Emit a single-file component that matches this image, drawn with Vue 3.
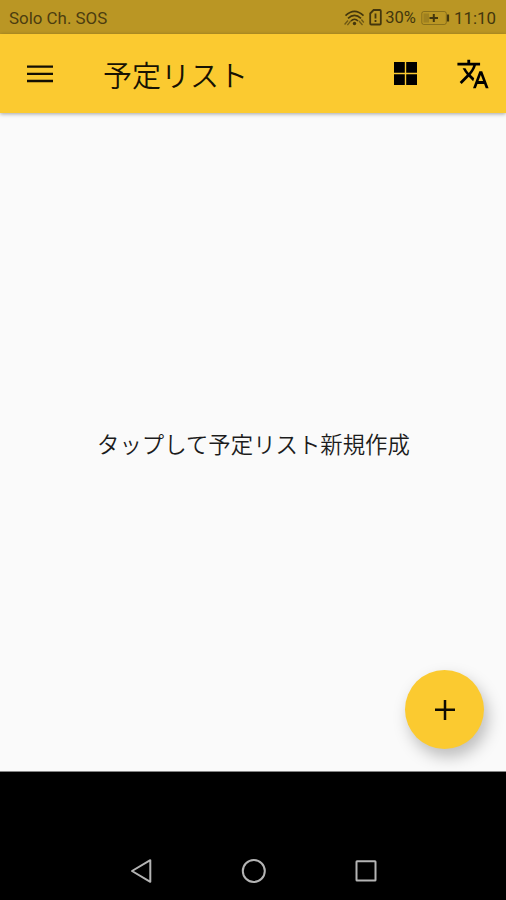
<template>
  <div class="screen">
    <!-- ステータスバー -->
    <div class="status-bar">
      <span class="carrier">Solo Ch. SOS</span>
      <div class="status-icons">
        <svg class="wifi" width="21" height="18" viewBox="0 0 21 18">
          <g fill="none" stroke="currentColor" stroke-width="1.6">
            <path d="M1.5 6.6Q10.5-2 19.5 6.6" />
            <path d="M4 9.4Q10.5 3.2 17 9.4" />
            <path d="M6.9 12Q10.5 8.4 14.1 12" />
            <path d="M.6 15.5l3.4-4M3.4 16.2l3.2-4M15 12l3.5 4M17.4 10.5l2.4 3" stroke-width="1.3" opacity=".65" />
          </g>
          <circle cx="10.5" cy="14.5" r="1.7" fill="currentColor" />
        </svg>
        <svg class="sim" width="13" height="17" viewBox="0 0 13 17">
          <path d="M1.2 4.5L4.6 1h6.2q1 0 1 1v12.5q0 1-1 1H2.2q-1 0-1-1z" fill="none" stroke="currentColor" stroke-width="1.8" />
          <path d="M6.5 4.5v5M6.5 11v2" stroke="currentColor" stroke-width="1.8" />
        </svg>
        <span class="percent">30%</span>
        <svg class="battery" width="29" height="16" viewBox="0 0 29 16">
          <rect x=".8" y="1.5" width="24.5" height="13" rx="2" fill="none" stroke="currentColor" opacity=".4" />
          <rect x="2.5" y="3.5" width="5.5" height="9" fill="currentColor" opacity=".22" />
          <path d="M8.5 8h8.5M12.8 4v8" stroke="currentColor" stroke-width="2" />
          <path d="M27 4.5v7" stroke="currentColor" stroke-width="2.2" />
        </svg>
        <span class="clock">{{ time }}</span>
      </div>
    </div>

    <!-- アプリバー -->
    <header class="app-bar">
      <button class="icon-button menu-button" aria-label="メニュー">
        <svg width="26" height="18" viewBox="0 0 26 18">
          <path d="M0 1.6h26M0 8.8h26M0 16h26" stroke="#130f03" stroke-width="2.3" />
        </svg>
      </button>
      <h1 class="title">予定リスト</h1>
      <button class="icon-button grid-button" aria-label="表示切替">
        <svg width="23" height="23" viewBox="0 0 23 23">
          <path d="M0 0h10.8v10.8H0zM12.2 0H23v10.8H12.2zM0 12.2h10.8V23H0zM12.2 12.2H23V23H12.2z" />
        </svg>
      </button>
      <button class="icon-button" aria-label="言語">
        <svg width="34" height="34" viewBox="0 0 24 24">
          <path d="M12.87 15.07l-2.54-2.51.03-.03c1.74-1.94 2.98-4.17 3.71-6.53H17V4h-7V2H8v2H1v1.99h11.17C11.5 7.92 10.44 9.75 9 11.35 8.07 10.32 7.3 9.19 6.69 8h-2c.73 1.63 1.73 3.17 2.98 4.56l-5.09 5.02L4 19l5-5 3.11 3.11.76-2.04zM18.5 10h-2L12 22h2l1.12-3h4.75L21 22h2l-4.5-12zm-2.62 7l1.62-4.33L19.12 17h-3.24z" />
        </svg>
      </button>
    </header>

    <!-- 空の一覧 -->
    <main class="content">
      <p class="empty-text">タップして予定リスト新規作成</p>
      <button class="fab" aria-label="追加">
        <svg width="20" height="20" viewBox="0 0 20 20">
          <path d="M0 9.8h20M10 0v20" stroke="#100c02" stroke-width="2.5" />
        </svg>
      </button>
    </main>

    <!-- ナビゲーションバー -->
    <nav class="nav-bar">
      <svg width="24" height="28" viewBox="0 0 24 28">
        <path d="M2 14L20.3 3.2v21.6z" />
      </svg>
      <svg width="28" height="28" viewBox="0 0 28 28">
        <circle cx="13.8" cy="14" r="11" />
      </svg>
      <svg width="24" height="28" viewBox="0 0 24 28">
        <rect x="2.5" y="4.2" width="19" height="19.4" rx=".5" />
      </svg>
    </nav>
  </div>
</template>

<script setup>
import { ref } from 'vue'

const time = ref('11:10')
</script>

<style>
body {
  margin: 0;
}
</style>

<style scoped>
.screen {
  display: flex;
  flex-direction: column;
  height: 900px;
  overflow: hidden;
  background-color: #fafafa;
  font-family: Roboto, 'Noto Sans CJK JP', sans-serif;
}

/* ステータスバー */
.status-bar {
  display: flex;
  align-items: center;
  justify-content: space-between;
  flex-shrink: 0;
  height: 34px;
  padding: 1px 10px 0 9px;
  box-sizing: border-box;
  background-color: #ba9624;
  color: #4c3d10;
  font-size: 16.5px;
}

.carrier {
  padding-top: 1px;
  font-size: 16.9px;
}

.status-icons {
  display: flex;
  align-items: center;
  color: #43360d;
}

.sim {
  margin-left: 4px;
}

.percent {
  margin-left: 3px;
}

.battery {
  margin: 0 4px 0 5px;
}

.clock {
  padding-top: 1px;
  font-size: 16.9px;
}

/* アプリバー */
.app-bar {
  display: flex;
  align-items: center;
  flex-shrink: 0;
  height: 79px;
  padding: 0 16px 0 27px;
  box-sizing: border-box;
  background-color: #fbca30;
  box-shadow: 0 1px 4px rgba(0, 0, 0, 0.35);
  z-index: 1;
}

.icon-button {
  display: flex;
  padding: 0;
  border: none;
  background: none;
  cursor: pointer;
}

.title {
  flex: 1;
  margin: 0 0 0 50px;
  padding-top: 7px;
  font-size: 29px;
  font-weight: 350;
  line-height: 40px;
  color: #171203;
}

.grid-button {
  margin-right: 39px;
}

/* 一覧 */
.content {
  position: relative;
  display: flex;
  align-items: center;
  justify-content: center;
  flex: 1;
  border-bottom: 1px solid #858585;
}

.empty-text {
  margin: 0 0 0 1px;
  padding-top: 5px;
  font-size: 22.4px;
  font-weight: 350;
  line-height: 30px;
  color: #1c1c1c;
}

.fab {
  position: absolute;
  right: 22px;
  bottom: 22px;
  display: flex;
  align-items: center;
  justify-content: center;
  width: 79px;
  height: 79px;
  padding: 0;
  border: none;
  border-radius: 50%;
  background-color: #fbca30;
  box-shadow: 4px 8px 16px rgba(0, 0, 0, 0.25);
  cursor: pointer;
}

/* ナビゲーションバー */
.nav-bar {
  display: flex;
  align-items: flex-end;
  justify-content: space-between;
  flex-shrink: 0;
  height: 128px;
  padding: 0 128px 15px 130px;
  box-sizing: border-box;
  background-color: #000;
}

.nav-bar svg {
  fill: none;
  stroke: #b4b4b4;
  stroke-width: 2;
  stroke-linejoin: round;
}
</style>
